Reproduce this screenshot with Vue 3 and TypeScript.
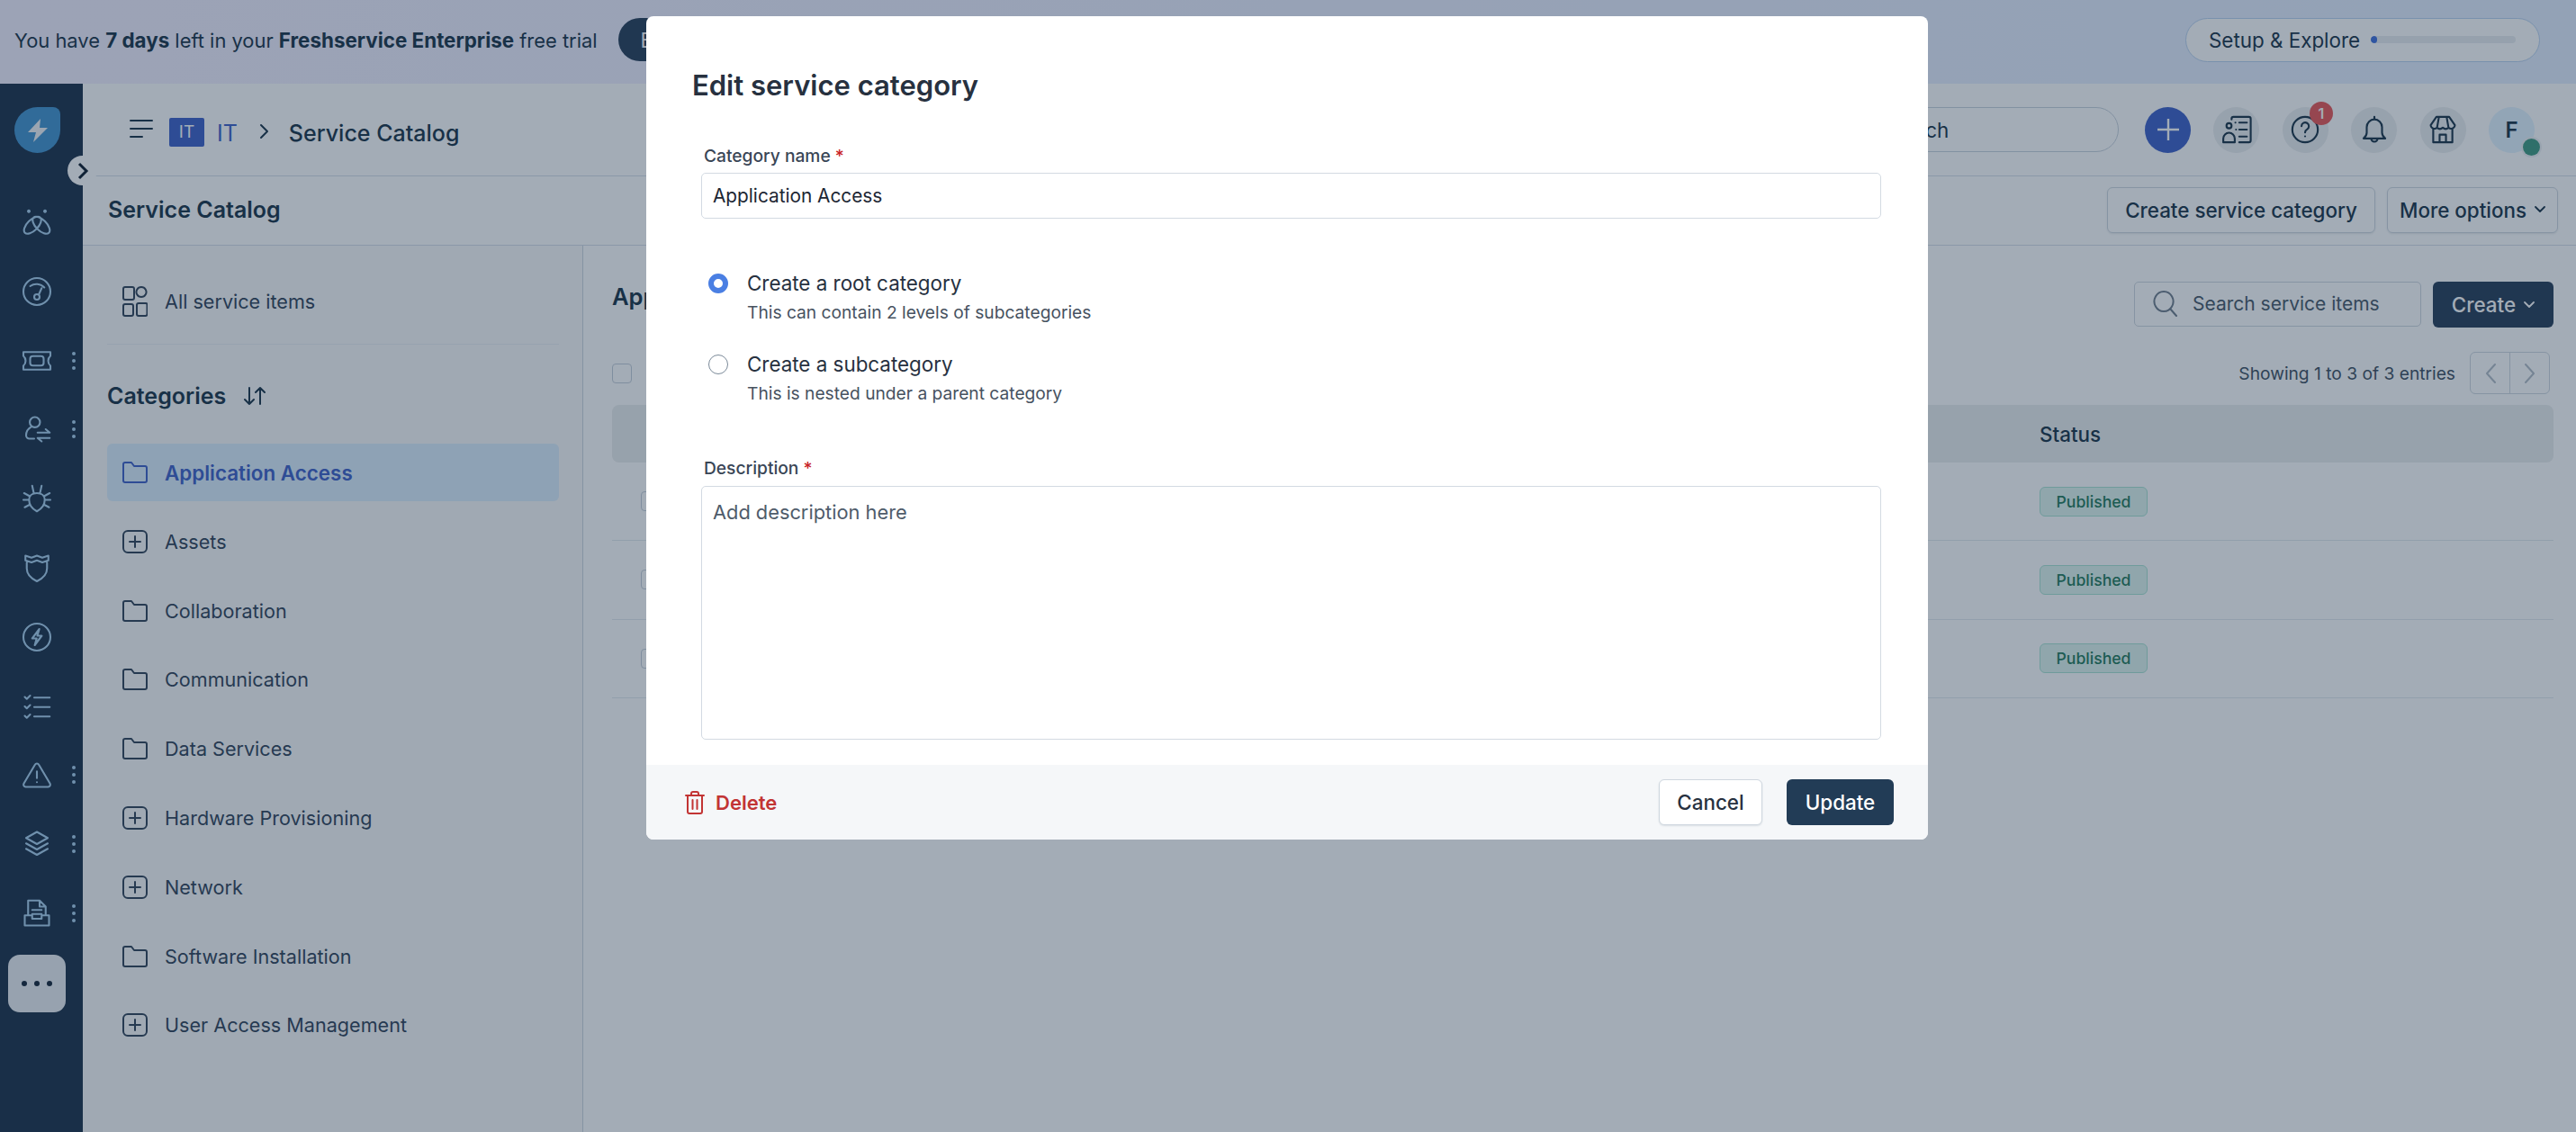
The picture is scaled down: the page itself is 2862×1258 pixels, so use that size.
<script setup lang="ts">
interface NavIcon { d: string; more: boolean }
interface Category { name: string; icon: 'folder' | 'plus'; active?: boolean }

const navIcons: NavIcon[] = [
  { more: false, d: 'M6 3.200a.6 .6 0 1 0 .01 0zM18 3.200a.6 .6 0 1 0 .01 0zM3.140 19.860A8 4 -45 1 1 14.460 8.540A8 4 -45 1 1 3.140 19.860zM20.860 19.860A8 4 45 1 1 9.540 8.540A8 4 45 1 1 20.860 19.860z' },
  { more: false, d: 'M12 2a10 10 0 1 0 0 20a10 10 0 1 0 0-20zM7 8a8 8 0 0 1 10.500 1M13.300 14.500L15.500 9.500M12 14a2 2 0 1 0 0 4a2 2 0 1 0 0-4z' },
  { more: true, d: 'M2 5.500h20v2.800a5 5 0 0 0 0 7.400v2.800H2v-2.800a5 5 0 0 0 0-7.400zM9 8.500h6a2 2 0 0 1 2 2v3a2 2 0 0 1-2 2H9a2 2 0 0 1-2-2v-3a2 2 0 0 1 2-2z' },
  { more: true, d: 'M10.500 3a3.800 3.800 0 1 0 0 7.600a3.800 3.800 0 1 0 0-7.600zM7.800 10.200C5.500 11.500 4 14 4 16.500a2.500 2.500 0 0 0 2.500 2.500h3.500M12.500 14.500h9l-3-2.500M21.500 18.500h-9l3 2.500' },
  { more: false, d: 'M12 21.500c-3.800-2-5.800-5-5.800-8.500c0-3 2.300-5 5.800-5s5.800 2 5.800 5c0 3.500-2 6.500-5.800 8.500zM8.500 2.500l1.200 5.500M15.500 2.500L14.300 8M6.200 10L2.500 8M6.200 13H2M6.800 16.500L3 18.500M17.800 10l3.700-2M17.800 13H22M17.200 16.500l3.800 2' },
  { more: false, d: 'M4.500 8v4.500c0 4.500 3 7.300 7.500 9.500c4.500-2.200 7.500-5 7.500-9.500V8M3.500 3L8 4.500L12 3l4 1.500L20.500 3v3.500L16 8l-4-1.500L8 8L3.500 6.500z' },
  { more: false, d: 'M12 2a10 10 0 1 0 0 20a10 10 0 1 0 0-20zM13.800 6L8.500 13h3.300l-1.400 5l5.200-7h-3.300z' },
  { more: false, d: 'M3 5l1.500 1.500L7 4M3 12l1.500 1.500L7 11M3 19l1.500 1.500L7 18M10 5.500h11.500M10 12.500h11.500M10 19.500h11.500' },
  { more: true, d: 'M10.600 4.500L2.300 18.500A1.700 1.700 0 0 0 3.700 21h16.600a1.700 1.700 0 0 0 1.400-2.500L13.400 4.500a1.600 1.600 0 0 0-2.800 0zM12 9.500v5M12 17.500h.01' },
  { more: true, d: 'M12 3l8 4.500l-8 4.500l-8-4.500zM4 11.500L12 16l8-4.500M4 15.500L12 20l8-4.500' },
  { more: true, d: 'M5.500 13V2.500h8.500l4.500 4.500v6M14 2.500V7h4.500M8.500 9.500h7M8.500 12.500h7M3 13.500h5.500v2.500h7v-2.500H21V21H3z' },
]

const categories: Category[] = [
  { name: 'Application Access', icon: 'folder', active: true },
  { name: 'Assets', icon: 'plus' },
  { name: 'Collaboration', icon: 'folder' },
  { name: 'Communication', icon: 'folder' },
  { name: 'Data Services', icon: 'folder' },
  { name: 'Hardware Provisioning', icon: 'plus' },
  { name: 'Network', icon: 'plus' },
  { name: 'Software Installation', icon: 'folder' },
  { name: 'User Access Management', icon: 'plus' },
]

const rows: number[] = [1, 2, 3]
</script>

<template>
  <div class="page">
    <div class="banner">
      <div class="banner-left">
        <span class="trial-text">You have <b>7 days</b> left in your <b>Freshservice Enterprise</b> free trial</span>
        <span class="trial-btn">Explore plans</span>
      </div>
      <div class="setup">
        <span>Setup &amp; Explore</span>
        <span class="track"><span class="fill"></span></span>
      </div>
    </div>

    <div class="body">
      <aside class="sidebar">
        <div class="logo">
          <svg width="26" height="28" viewBox="0 0 26 28"><path d="M16 1L2 16h9l-3 11l16-16h-9z" /></svg>
        </div>
        <button class="collapse" type="button">
          <svg width="14" height="22" viewBox="0 0 14 22"><path d="M3 3l8 8l-8 8" /></svg>
        </button>
        <div class="nav">
          <div v-for="(item, i) in navIcons" :key="i" class="nav-item">
            <svg class="nav-icon" width="36" height="36" viewBox="0 0 24 24"><path :d="item.d" /></svg>
            <span v-if="item.more" class="kebab"><i></i><i></i><i></i></span>
          </div>
        </div>
        <div class="more-btn"><i></i><i></i><i></i></div>
      </aside>

      <main class="main">
        <header class="header">
          <svg class="burger" width="26" height="22" viewBox="0 0 26 22"><path d="M1 2h24M1 11h24M1 20h13" /></svg>
          <span class="ws-badge">IT</span>
          <span class="ws-name">IT</span>
          <svg class="crumb" width="12" height="18" viewBox="0 0 12 18"><path d="M2 2l7 7l-7 7" /></svg>
          <span class="crumb-title">Service Catalog</span>
          <div class="global-search">Search</div>
          <span class="round primary">
            <svg width="28" height="28" viewBox="0 0 28 28"><path d="M14 2v24M2 14h24" /></svg>
          </span>
          <span class="round">
            <svg width="34" height="34" viewBox="0 0 24 24"><path d="M8 4V3.500A1.500 1.500 0 0 1 9.500 2h12A1.500 1.500 0 0 1 23 3.500v17a1.500 1.500 0 0 1-1.500 1.500H14M6 7a2 2 0 1 0 0 4a2 2 0 1 0 0-4zM1.500 22v-3a4.500 4.500 0 0 1 9 0v3zM11 6.500h.01M14 6.500h6M11.500 12h.01M14 12h6M14 17.500h6" /></svg>
          </span>
          <span class="round">
            <svg width="34" height="34" viewBox="0 0 24 24"><path d="M12 2a10 10 0 1 0 0 20a10 10 0 1 0 0-20zM9.200 9.300a2.900 2.900 0 1 1 4.300 2.600c-1 .6-1.500 1.200-1.500 2.400M12 17.300h.01" /></svg>
            <span class="count">1</span>
          </span>
          <span class="round">
            <svg width="34" height="34" viewBox="0 0 24 24"><path d="M12 2v2M12 4a6 6 0 0 0-6 6v4.500c0 1.700-.8 3-2.500 4.500h17c-1.700-1.500-2.500-2.800-2.500-4.500V10a6 6 0 0 0-6-6zM9.500 19a2.500 2.500 0 0 0 5 0" /></svg>
          </span>
          <span class="round">
            <svg width="34" height="34" viewBox="0 0 24 24"><path d="M7 2h10l4.500 6.500a3 3 0 0 1-5 2a3.400 3.400 0 0 1-4.500 0a3.400 3.400 0 0 1-4.500 0a3 3 0 0 1-5-2zM9 2L7.500 10.500M15 2l1.500 8.500M4.500 11.500V22h15V11.500M9.500 22v-6h5v6" /></svg>
          </span>
          <span class="round avatar">F<span class="online"></span></span>
        </header>

        <div class="subheader">
          <span class="sub-title">Service Catalog</span>
          <span class="ghost-btn">Create service category</span>
          <span class="ghost-btn more">More options
            <svg class="caret" width="12" height="8" viewBox="0 0 12 8"><path d="M1 1l5 5l5-5" /></svg>
          </span>
        </div>

        <div class="content">
          <nav class="cats">
            <div class="cat-row all">
              <svg class="cat-icon" width="28" height="34" viewBox="0 0 28 34"><path d="M3 1h8a2 2 0 0 1 2 2v10a2 2 0 0 1-2 2H3a2 2 0 0 1-2-2V3a2 2 0 0 1 2-2zM21 1a5.500 5.500 0 1 0 .01 0zM3 20h7a2 2 0 0 1 2 2v9a2 2 0 0 1-2 2H3a2 2 0 0 1-2-2v-9a2 2 0 0 1 2-2zM18 19h8a1.500 1.500 0 0 1 1.500 1.500V31a2 2 0 0 1-2 2H18a2 2 0 0 1-2-2V21a2 2 0 0 1 2-2z" /></svg>
              <span>All service items</span>
            </div>
            <div class="cats-head">
              <span>Categories</span>
              <svg width="24" height="22" viewBox="0 0 24 22"><path d="M6 2v18M1 15l5 5l5-5M18 20V2M13 7l5-5l5 5" /></svg>
            </div>
            <div class="cat-list">
              <div v-for="cat in categories" :key="cat.name" class="cat-row" :class="{ active: cat.active }">
                <svg v-if="cat.icon === 'folder'" class="cat-icon" width="28" height="24" viewBox="0 0 28 24"><path d="M1 3a2 2 0 0 1 2-2h7l3 4h12a2 2 0 0 1 2 2v14a2 2 0 0 1-2 2H3a2 2 0 0 1-2-2z" /></svg>
                <svg v-else class="cat-icon" width="28" height="26" viewBox="0 0 28 26"><path d="M6 1h16a5 5 0 0 1 5 5v14a5 5 0 0 1-5 5H6a5 5 0 0 1-5-5V6a5 5 0 0 1 5-5zM14 7v12M8 13h12" /></svg>
                <span>{{ cat.name }}</span>
              </div>
            </div>
          </nav>

          <section class="items">
            <div class="toolbar">
              <span class="items-title">Application Access</span>
              <div class="item-search">
                <svg width="28" height="30" viewBox="0 0 28 30"><path d="M12 2a10.500 11 0 1 0 .01 0zM19 21l7 8" /></svg>
                <span>Search service items</span>
              </div>
              <span class="create-btn">Create
                <svg class="caret" width="12" height="8" viewBox="0 0 12 8"><path d="M1 1l5 5l5-5" /></svg>
              </span>
            </div>
            <div class="list-meta">
              <span class="check"></span>
              <span class="showing">Showing 1 to 3 of 3 entries</span>
              <div class="pager">
                <span><svg width="14" height="24" viewBox="0 0 14 24"><path d="M12 2L3 12l9 10" /></svg></span>
                <span><svg width="14" height="24" viewBox="0 0 14 24"><path d="M2 2l9 10l-9 10" /></svg></span>
              </div>
            </div>
            <div class="table-row table-head">
              <span></span>
              <span>Status</span>
            </div>
            <div v-for="r in rows" :key="r" class="table-row">
              <span class="row-check"><span class="check"></span></span>
              <span><span class="pill">Published</span></span>
            </div>
          </section>
        </div>
      </main>
    </div>

    <div class="overlay">
      <div class="modal">
        <h2 class="modal-title">Edit service category</h2>
        <form class="form">
          <label class="field-label">Category name <em>*</em></label>
          <input class="text-input" type="text" value="Application Access" readonly />
          <div class="radios">
            <div class="radio-row">
              <span class="radio on"></span>
              <div>
                <div class="radio-label">Create a root category</div>
                <div class="radio-hint">This can contain 2 levels of subcategories</div>
              </div>
            </div>
            <div class="radio-row">
              <span class="radio"></span>
              <div>
                <div class="radio-label">Create a subcategory</div>
                <div class="radio-hint">This is nested under a parent category</div>
              </div>
            </div>
          </div>
          <label class="field-label desc">Description <em>*</em></label>
          <textarea class="text-area" placeholder="Add description here" readonly></textarea>
        </form>
        <footer class="modal-footer">
          <span class="delete">
            <svg width="22" height="26" viewBox="0 0 22 26"><path d="M1 5h20M7 5V3a2 2 0 0 1 2-2h4a2 2 0 0 1 2 2v2M3 5v18a2 2 0 0 0 2 2h12a2 2 0 0 0 2-2V5M8.500 10v10M13.500 10v10" /></svg>
            Delete
          </span>
          <span class="btn cancel">Cancel</span>
          <span class="btn update">Update</span>
        </footer>
      </div>
    </div>
  </div>
</template>

<style>
html, body { margin: 0; background: #fff; }
</style>

<style scoped>
.page {
  position: relative;
  display: flex;
  flex-direction: column;
  width: 2862px;
  height: 1258px;
  overflow: hidden;
  font-family: Inter, "Noto Sans", sans-serif;
  font-size: 22.4px;
  color: #183247;
  background: #fff;
}
svg path { fill: none; stroke: currentColor; stroke-width: 2; stroke-linecap: round; stroke-linejoin: round; }

.banner {
  flex: 0 0 93px;
  display: flex;
  align-items: center;
  justify-content: space-between;
  box-sizing: border-box;
  padding: 0 40px 5px 16px;
  background: linear-gradient(90deg, #f4f0ff 0%, #e4eeff 100%);
}
.banner-left { display: flex; align-items: center; gap: 23px; }
.trial-text { font-size: 21.900px; }
.trial-text b { font-size: 22.400px; font-weight: 700; }
.trial-btn {
  display: flex;
  align-items: center;
  height: 48px;
  padding: 0 25px;
  border-radius: 24px;
  background: #263c58;
  color: #fff;
}
.setup {
  display: flex;
  align-items: center;
  gap: 12px;
  box-sizing: border-box;
  width: 394px;
  height: 49px;
  padding: 0 26px 0 25px;
  border: 1.500px solid #b9d2f0;
  border-radius: 25px;
  background: #fff;
}
.track { flex: 1; height: 8px; border-radius: 4px; background: #e9edf1; overflow: hidden; }
.fill { display: block; width: 7px; height: 8px; border-radius: 4px; background: #3f6fdc; }

.body { flex: 1; display: flex; min-height: 0; }

.sidebar {
  position: relative;
  flex: 0 0 92px;
  display: flex;
  flex-direction: column;
  background: #1a2f48;
  color: #a9d0ef;
}
.logo {
  display: flex;
  align-items: center;
  justify-content: center;
  width: 51px;
  height: 51px;
  margin: 26px 0 0 16px;
  border-radius: 50% 8px 50% 50%;
  background: #4293cf;
}
.logo path { fill: #f2f4f7; stroke: none; }
.collapse {
  position: absolute;
  top: 80px;
  left: 75px;
  z-index: 2;
  display: flex;
  align-items: center;
  justify-content: center;
  width: 33px;
  height: 33px;
  padding: 0 0 0 1px;
  border: 0;
  border-radius: 50%;
  background: #fff;
  color: #0a1a2a;
}
.collapse path { stroke-width: 3; stroke-linecap: butt; stroke-linejoin: miter; }
.nav { margin-top: 38.600px; }
.nav-item { display: flex; align-items: center; height: 76.800px; padding-left: 23px; }
.nav-icon path { stroke-width: 1.400; }
.kebab { display: flex; flex-direction: column; gap: 4px; margin-left: 21px; }
.kebab i { width: 4px; height: 4px; border-radius: 50%; background: currentColor; }
.more-btn {
  display: flex;
  align-items: center;
  justify-content: center;
  gap: 8px;
  width: 64px;
  height: 64px;
  margin: 8px 0 0 9px;
  border-radius: 13px;
  background: #ebeff3;
}
.more-btn i { width: 6px; height: 6px; border-radius: 50%; background: #132437; }

.main { flex: 1; display: flex; flex-direction: column; min-width: 0; }

.header {
  flex: 0 0 103px;
  display: flex;
  align-items: center;
  box-sizing: border-box;
  padding: 0 46px 0 52px;
  border-bottom: 1.500px solid #d5dee8;
  background: #fff;
}
.burger { margin: -2px 18px 0 0; }
.ws-badge {
  display: flex;
  align-items: center;
  justify-content: center;
  width: 39px;
  height: 32px;
  margin-top: 5px;
  border-radius: 2px;
  background: #3c5fc8;
  color: #fff;
  font-size: 19px;
}
.ws-name { margin: 7px 0 0 14px; color: #3c5fc8; font-size: 25px; }
.crumb { margin: 4px 0 0 24px; }
.crumb-title { margin: 7px 0 0 21px; font-size: 25px; font-weight: 500; }
.global-search {
  display: flex;
  align-items: center;
  box-sizing: border-box;
  width: 320px;
  height: 50px;
  margin-left: auto;
  margin-right: 29px;
  padding-left: 56px;
  border: 1.500px solid #c9d3dd;
  border-radius: 25px;
}
.round {
  position: relative;
  display: flex;
  align-items: center;
  justify-content: center;
  flex: 0 0 51px;
  height: 51px;
  margin-right: 25.400px;
  border-radius: 50%;
  background: #eceef0;
}
.round svg { flex: none; }
.round svg path { stroke-width: 1.500; }
.round.primary { background: #3c5fc8; color: #fff; }
.round.primary svg path { stroke-width: 2.400; stroke-linecap: butt; }
.round.avatar { margin-right: 0; background: #e3f3ff; font-size: 24px; font-weight: 600; }
.count {
  position: absolute;
  top: -6px;
  right: -5px;
  display: flex;
  align-items: center;
  justify-content: center;
  width: 26px;
  height: 26px;
  border-radius: 50%;
  background: #e95555;
  color: #fff;
  font-size: 16px;
  font-weight: 600;
}
.online {
  position: absolute;
  right: -6px;
  bottom: -3px;
  width: 19px;
  height: 19px;
  border-radius: 50%;
  background: #3f9a80;
  box-shadow: 0 0 0 2px #eef1f3;
}

.subheader {
  flex: 0 0 77px;
  display: flex;
  align-items: center;
  gap: 13px;
  box-sizing: border-box;
  padding: 0 20px 2px 28px;
  border-bottom: 1.500px solid #d5dee8;
}
.sub-title { margin-right: auto; font-size: 25px; font-weight: 600; }
.ghost-btn {
  display: flex;
  align-items: center;
  justify-content: center;
  gap: 9px;
  box-sizing: border-box;
  width: 298px;
  height: 51px;
  border: 1.500px solid #cfd7df;
  border-radius: 6px;
  font-weight: 500;
  box-shadow: 0 1px 2px rgba(24, 50, 71, 0.1);
}
.ghost-btn.more { width: 190px; }
.caret path { stroke-width: 1.800; }

.content { flex: 1; display: flex; min-height: 0; }

.cats {
  flex: 0 0 556px;
  box-sizing: border-box;
  padding: 30px 26px 0 27px;
  border-right: 1.500px solid #cdd6df;
  background: #fbfbfb;
}
.cat-row {
  display: flex;
  align-items: center;
  gap: 19px;
  height: 64px;
  padding-left: 17px;
  border-radius: 6px;
  color: #2f4157;
  font-size: 21.600px;
}
.cat-row .cat-icon { flex: 0 0 28px; }
.cat-row.all {
  box-sizing: border-box;
  height: 80px;
  padding-bottom: 16px;
  border-bottom: 1.500px solid #ebeff3;
  border-radius: 0;
}
.cats-head {
  display: flex;
  align-items: center;
  gap: 20px;
  height: 34px;
  margin: 40px 0 36px;
  font-size: 25px;
  font-weight: 600;
}
.cat-list { display: flex; flex-direction: column; gap: 12.800px; }
.cat-row.active { background: #dceefd; color: #3c5fc8; font-size: 22.400px; font-weight: 600; }

.items { flex: 1; min-width: 0; padding: 40px 25px 0 32px; }
.toolbar { display: flex; align-items: flex-start; gap: 13px; }
.items-title { margin-right: auto; font-size: 25.600px; font-weight: 600; line-height: 34px; }
.item-search {
  display: flex;
  align-items: center;
  gap: 16px;
  box-sizing: border-box;
  width: 319px;
  height: 50px;
  padding: 0 0 2px 20px;
  border: 1.500px solid #cfd7df;
  border-radius: 5px;
  color: #475867;
  font-size: 21px;
}
.item-search svg { color: #6f7c8a; }
.create-btn {
  display: flex;
  align-items: center;
  justify-content: center;
  gap: 9px;
  width: 134px;
  height: 51px;
  border-radius: 6px;
  background: #263c58;
  color: #fff;
  font-weight: 500;
}
.list-meta { display: flex; align-items: center; height: 47px; margin: 27px 4px 12px 0; }
.check { display: block; box-sizing: border-box; width: 22px; height: 22px; border: 1.500px solid #c4ced9; border-radius: 4px; }
.showing { margin-left: auto; margin-right: 16px; font-size: 19.200px; color: #3e4f60; }
.pager { display: flex; box-sizing: border-box; width: 89px; height: 47px; border: 1.500px solid #cfd7df; border-radius: 6px; }
.pager span { flex: 1; display: flex; align-items: center; justify-content: center; color: #b3bcc6; }
.pager span + span { border-left: 1.500px solid #cfd7df; }
.table-row {
  display: grid;
  grid-template-columns: 1586px 1fr;
  align-items: center;
  box-sizing: border-box;
  height: 87.300px;
  border-bottom: 1.500px solid #e3e9ef;
}
.table-head { height: 64px; border: 0; border-radius: 8px; background: #eceeee; font-weight: 500; }
.row-check { padding-left: 32px; }
.pill {
  display: inline-flex;
  align-items: center;
  justify-content: center;
  box-sizing: border-box;
  width: 120px;
  height: 33px;
  border: 1.500px solid #a9e3d3;
  border-radius: 6px;
  background: #dff5ee;
  color: #1f7a5a;
  font-size: 17.600px;
  font-weight: 500;
}

.overlay {
  position: absolute;
  inset: 0;
  z-index: 10;
  display: flex;
  justify-content: center;
  align-items: flex-start;
  box-sizing: border-box;
  padding-right: 2px;
  background: rgba(26, 47, 72, 0.4);
}
.modal {
  display: flex;
  flex-direction: column;
  width: 1424px;
  height: 915px;
  margin-top: 18px;
  border-radius: 8px;
  background: #fff;
  overflow: hidden;
  color: #27313f;
}
.modal-title { margin: 57px 0 0 51px; font-size: 31px; font-weight: 600; line-height: 40px; }
.form { display: flex; flex-direction: column; padding: 45px 52px 0 61px; }
.field-label { padding-left: 3px; font-size: 19.200px; font-weight: 500; line-height: 26px; color: #3a4656; }
.field-label em { color: #c82124; font-style: normal; }
.text-input, .text-area {
  box-sizing: border-box;
  width: 100%;
  border: 1.500px solid #d3dae2;
  border-radius: 5px;
  outline: 0;
  font: inherit;
  color: #1c2633;
  background: #fff;
}
.text-input { height: 51px; margin-top: 6px; padding: 0 12px; font-size: 20.800px; }
.text-area { display: block; height: 282px; margin-top: 7px; padding: 14px 12px; font-size: 21.800px; line-height: 28px; resize: none; }
.text-area::placeholder { color: #4f5c6b; opacity: 1; }
.radios { display: flex; flex-direction: column; gap: 30px; margin-top: 57px; padding-left: 8px; }
.radio-row { display: flex; gap: 21px; }
.radio { box-sizing: border-box; flex: 0 0 22px; width: 22px; height: 22px; margin-top: 4px; border: 1.500px solid #7b8a99; border-radius: 50%; }
.radio.on { border: 6px solid #4a7fe3; }
.radio-label { line-height: 30px; color: #27313f; }
.radio-hint { margin-top: 4px; font-size: 19.200px; line-height: 26px; color: #47525f; }
.desc { margin-top: 57px; }
.modal-footer {
  display: flex;
  align-items: center;
  gap: 27px;
  height: 83px;
  margin-top: auto;
  padding: 0 38px 0 43px;
  background: #f5f7f9;
}
.delete {
  display: flex;
  align-items: center;
  gap: 12px;
  margin-right: auto;
  color: #c23434;
  font-size: 22px;
  font-weight: 600;
}
.btn {
  display: flex;
  align-items: center;
  justify-content: center;
  box-sizing: border-box;
  height: 51px;
  border-radius: 6px;
  font-weight: 500;
}
.cancel { width: 115px; border: 1.500px solid #cfd7df; background: #fff; box-shadow: 0 1px 2px rgba(24, 50, 71, 0.12); }
.update { width: 119px; background: #223c56; color: #fff; }
</style>
